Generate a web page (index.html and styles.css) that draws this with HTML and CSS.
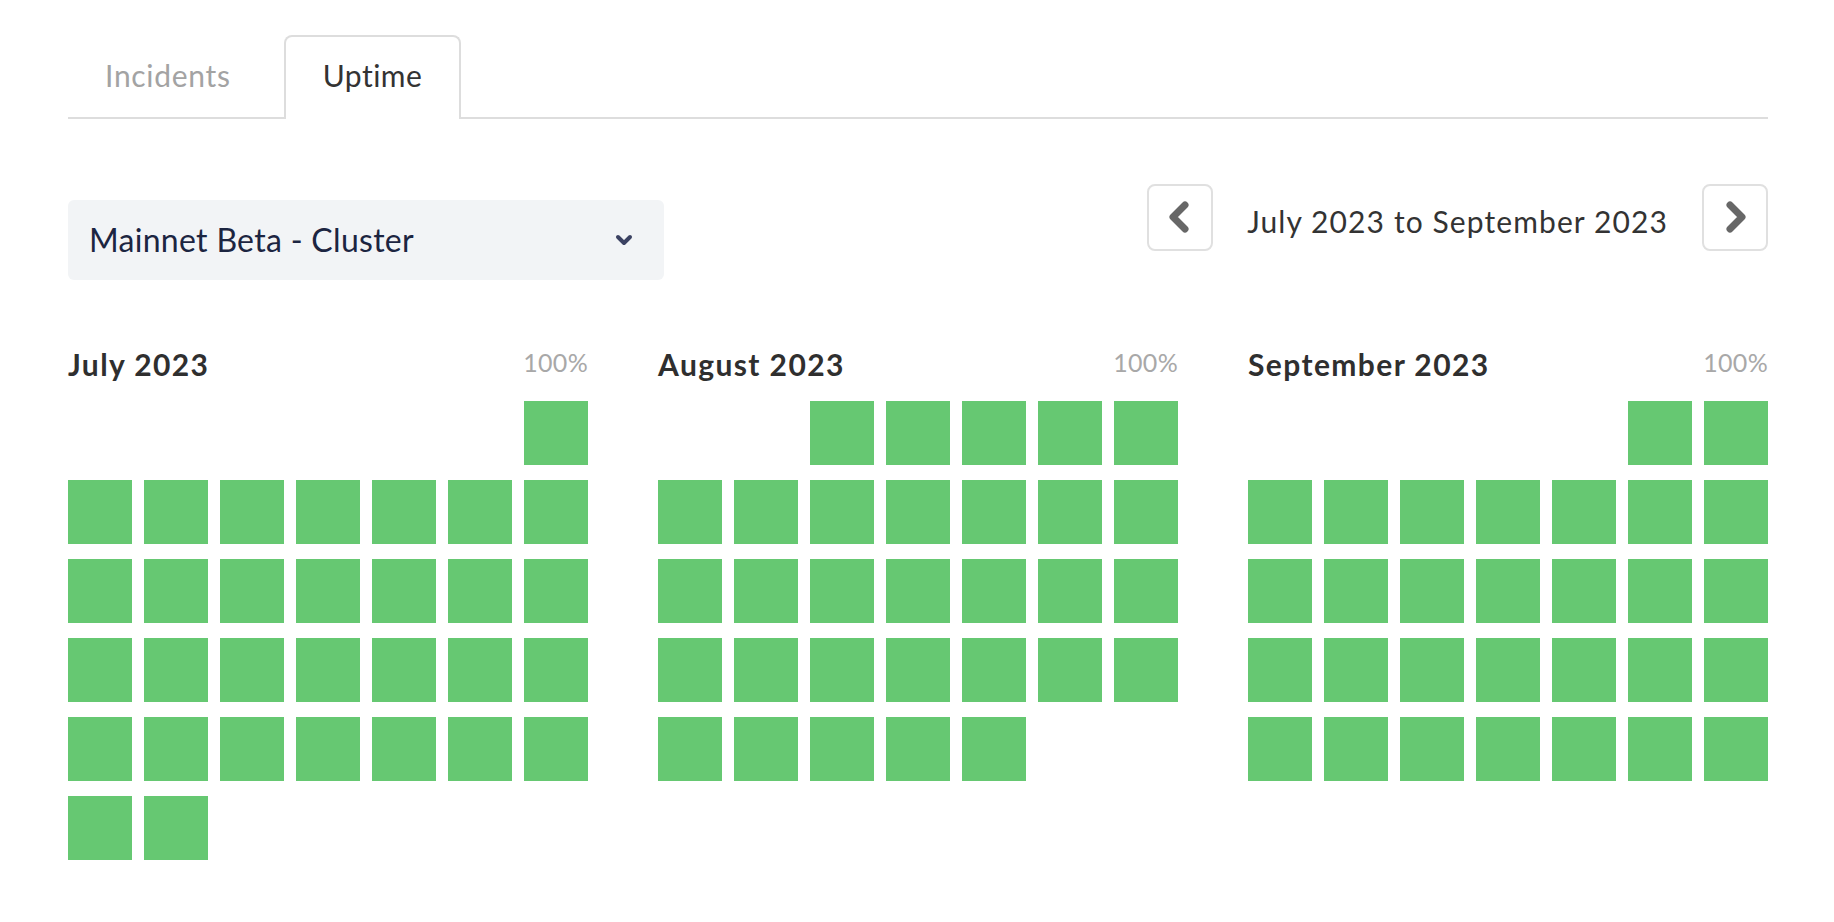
FILE: index.html
```html
<!DOCTYPE html>
<html lang="en">
<head>
<meta charset="utf-8">
<title>Uptime</title>
<link rel="stylesheet" href="styles.css">
</head>
<body>
<div class="page">
  <nav class="tabs">
    <a class="tab">Incidents</a>
    <a class="tab active">Uptime</a>
  </nav>

  <div class="controls">
    <div class="select">
      <span class="select-label">Mainnet Beta - Cluster</span>
      <svg class="select-caret" width="18" height="12" viewBox="0 0 18 12"><polyline points="3,3 9,9 15,3" fill="none" stroke="#3b4262" stroke-width="4" stroke-linecap="round" stroke-linejoin="round"/></svg>
    </div>
    <div class="pager">
      <button class="pager-btn" aria-label="Previous">
        <svg width="24" height="34" viewBox="0 0 24 34"><polyline points="17,4 5,16 17,28" fill="none" stroke="#676767" stroke-width="7" stroke-linecap="round" stroke-linejoin="round"/></svg>
      </button>
      <span class="pager-label">July 2023 to September 2023</span>
      <button class="pager-btn" aria-label="Next">
        <svg width="24" height="34" viewBox="0 0 24 34"><polyline points="7,4 19,16 7,28" fill="none" stroke="#676767" stroke-width="7" stroke-linecap="round" stroke-linejoin="round"/></svg>
      </button>
    </div>
  </div>

  <div class="months">
    <section class="month">
      <header class="month-head"><h3 class="month-title">July 2023</h3><span class="month-pct">100%</span></header>
      <div class="days">
        <span class="day start-7"></span>
        <span class="day"></span><span class="day"></span><span class="day"></span><span class="day"></span><span class="day"></span><span class="day"></span><span class="day"></span>
        <span class="day"></span><span class="day"></span><span class="day"></span><span class="day"></span><span class="day"></span><span class="day"></span><span class="day"></span>
        <span class="day"></span><span class="day"></span><span class="day"></span><span class="day"></span><span class="day"></span><span class="day"></span><span class="day"></span>
        <span class="day"></span><span class="day"></span><span class="day"></span><span class="day"></span><span class="day"></span><span class="day"></span><span class="day"></span>
        <span class="day"></span><span class="day"></span>
      </div>
    </section>
    <section class="month">
      <header class="month-head"><h3 class="month-title">August 2023</h3><span class="month-pct">100%</span></header>
      <div class="days">
        <span class="day start-3"></span><span class="day"></span><span class="day"></span><span class="day"></span><span class="day"></span>
        <span class="day"></span><span class="day"></span><span class="day"></span><span class="day"></span><span class="day"></span><span class="day"></span><span class="day"></span>
        <span class="day"></span><span class="day"></span><span class="day"></span><span class="day"></span><span class="day"></span><span class="day"></span><span class="day"></span>
        <span class="day"></span><span class="day"></span><span class="day"></span><span class="day"></span><span class="day"></span><span class="day"></span><span class="day"></span>
        <span class="day"></span><span class="day"></span><span class="day"></span><span class="day"></span><span class="day"></span>
      </div>
    </section>
    <section class="month">
      <header class="month-head"><h3 class="month-title">September 2023</h3><span class="month-pct">100%</span></header>
      <div class="days">
        <span class="day start-6"></span><span class="day"></span>
        <span class="day"></span><span class="day"></span><span class="day"></span><span class="day"></span><span class="day"></span><span class="day"></span><span class="day"></span>
        <span class="day"></span><span class="day"></span><span class="day"></span><span class="day"></span><span class="day"></span><span class="day"></span><span class="day"></span>
        <span class="day"></span><span class="day"></span><span class="day"></span><span class="day"></span><span class="day"></span><span class="day"></span><span class="day"></span>
        <span class="day"></span><span class="day"></span><span class="day"></span><span class="day"></span><span class="day"></span><span class="day"></span><span class="day"></span>
      </div>
    </section>
  </div>
</div>
</body>
</html>
```
FILE: styles.css
```css
* { box-sizing: border-box; }

html, body {
  margin: 0;
  padding: 0;
  background: #ffffff;
}

body {
  font-family: "Lato", "Open Sans", Arial, sans-serif;
  color: #333333;
}

.page {
  width: 1834px;
  padding: 35px 66px 0 68px;
}

/* Tabs */
.tabs {
  display: flex;
  border-bottom: 2px solid #dddddd;
  height: 84px;
}

.tab {
  display: block;
  font-size: 30px;
  line-height: 36px;
  letter-spacing: 0.7px;
  padding: 22px 37px 0;
  color: #a3a3a3;
  margin-right: 16px;
  cursor: pointer;
}

.tab.active {
  color: #333333;
  background: #ffffff;
  border: 2px solid #dddddd;
  border-bottom: none;
  border-radius: 8px 8px 0 0;
  margin-bottom: -2px;
  padding: 20px 37px 0;
  letter-spacing: 0.5px;
  height: 84px;
}

/* Controls */
.controls {
  display: flex;
  justify-content: space-between;
  align-items: flex-start;
  margin-top: 65px;
}

.select {
  display: flex;
  align-items: center;
  justify-content: space-between;
  width: 596px;
  height: 80px;
  margin-top: 16px;
  padding: 0 31px 0 21px;
  background: #f2f4f6;
  border-radius: 6px;
}

.select-label {
  font-size: 32px;
  letter-spacing: 0.3px;
  color: #1c2541;
  margin-top: -2px;
}

.select-caret {
  display: block;
}

.pager {
  display: flex;
  align-items: center;
}

.pager-btn {
  display: flex;
  align-items: center;
  justify-content: center;
  width: 66px;
  height: 67px;
  padding: 0;
  background: #ffffff;
  border: 2px solid #e0e0e0;
  border-radius: 8px;
}

.pager-label {
  font-size: 30px;
  letter-spacing: 1.1px;
  color: #333333;
  margin: 0 34px;
  padding-top: 6px;
}

/* Months */
.months {
  display: grid;
  grid-template-columns: repeat(3, 1fr);
  column-gap: 70px;
  width: 1700px;
  margin-top: 66px;
}

.month-head {
  display: flex;
  justify-content: space-between;
  align-items: flex-start;
  height: 36px;
  margin-bottom: 19px;
}

.month-title {
  margin: 0;
  font-size: 30px;
  line-height: 36px;
  letter-spacing: 1.4px;
  font-weight: 700;
  color: #2f2f2f;
}

.month-pct {
  font-size: 25px;
  line-height: 30px;
  letter-spacing: 0.3px;
  color: #a8a8a8;
  margin-top: 1px;
}

.days {
  display: grid;
  grid-template-columns: repeat(7, 64px);
  grid-auto-rows: 64px;
  column-gap: 12px;
  row-gap: 15px;
}

.day {
  display: block;
  background: #66c872;
}

.start-3 { grid-column-start: 3; }
.start-6 { grid-column-start: 6; }
.start-7 { grid-column-start: 7; }
```
